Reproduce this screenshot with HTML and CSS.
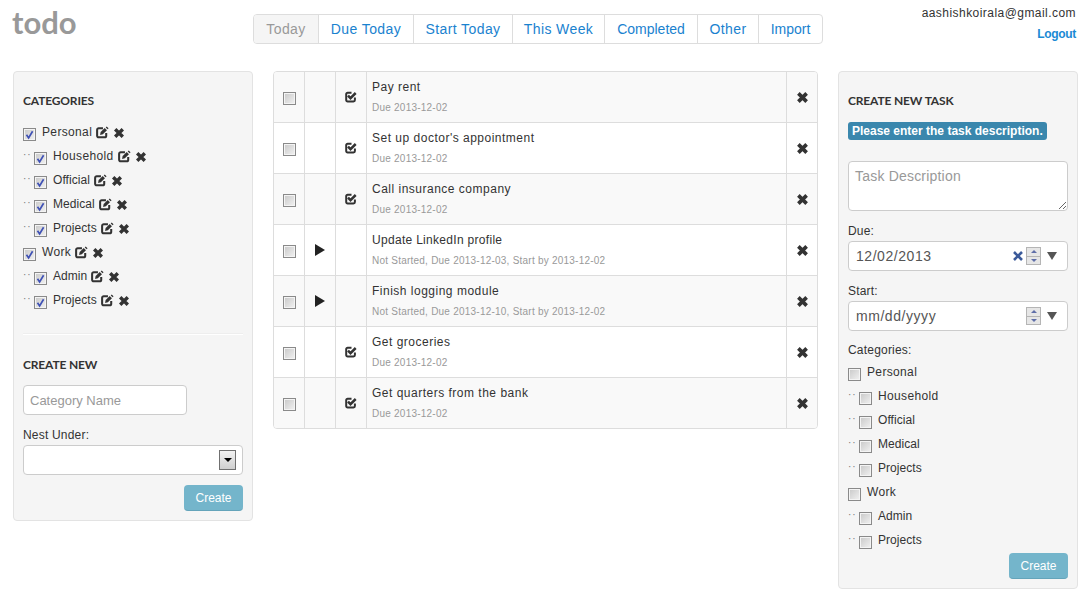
FILE: index.html
```html
<!DOCTYPE html>
<html lang="en">
<head>
<meta charset="utf-8">
<title>todo</title>
<link rel="stylesheet" href="styles.css">
</head>
<body>
<svg width="0" height="0" class="defs">
  <symbol id="edit" viewBox="0 0 14 14">
    <path d="M7.5 2.5H3A1.7 1.7 0 0 0 1.2 4.2V10.5A1.7 1.7 0 0 0 3 12.2H9.3A1.7 1.7 0 0 0 11 10.5V7.5" fill="none" stroke="currentColor" stroke-width="2.2"/>
    <path d="M4.4 9.6L5 6.5L9.4 2.2L11.8 4.6L7.4 9Z" fill="currentColor"/>
    <path d="M10.5 1.5L11.5 .5L13.5 2.5L12.5 3.5Z" fill="currentColor"/>
  </symbol>
  <symbol id="del" viewBox="0 0 12 12">
    <path d="M2.2 2.2L9.8 9.8M9.8 2.2L2.2 9.8" fill="none" stroke="currentColor" stroke-width="3.4"/>
  </symbol>
  <symbol id="task" viewBox="0 0 12 12">
    <path d="M6.5 1.7H2.6A1.4 1.4 0 0 0 1.2 3.1V9A1.4 1.4 0 0 0 2.6 10.4H8.5A1.4 1.4 0 0 0 9.9 9V6.5" fill="none" stroke="currentColor" stroke-width="2"/>
    <path d="M3 4.6L5.5 7.2L10.7 2" fill="none" stroke="currentColor" stroke-width="2.5"/>
  </symbol>
  <symbol id="tick" viewBox="0 0 11 11">
    <path d="M2.5 5.8L4.6 9L8.6 2.2" fill="none" stroke="currentColor" stroke-width="1.7"/>
  </symbol>
</svg>

<header class="top">
  <div class="brand">todo</div>
  <nav class="tabs">
    <a class="tab tab-active tab-w1">Today</a>
    <a class="tab tab-w2">Due Today</a>
    <a class="tab tab-w3">Start Today</a>
    <a class="tab tab-w4">This Week</a>
    <a class="tab tab-w5">Completed</a>
    <a class="tab tab-w6">Other</a>
    <a class="tab tab-w7">Import</a>
  </nav>
  <div class="user">
    <div class="email">aashishkoirala@gmail.com</div>
    <a class="logout">Logout</a>
  </div>
</header>

<main class="layout">
  <aside class="panel panel-left">
    <h4 class="panel-title">CATEGORIES</h4>
    <ul class="cats">
      <li class="cat"><span class="cb"><svg class="tick"><use href="#tick"/></svg></span><span class="cat-name">Personal</span><svg class="ic-edit"><use href="#edit"/></svg><svg class="ic-del"><use href="#del"/></svg></li>
      <li class="cat cat-sub"><span class="dots">··</span><span class="cb"><svg class="tick"><use href="#tick"/></svg></span><span class="cat-name">Household</span><svg class="ic-edit"><use href="#edit"/></svg><svg class="ic-del"><use href="#del"/></svg></li>
      <li class="cat cat-sub"><span class="dots">··</span><span class="cb"><svg class="tick"><use href="#tick"/></svg></span><span class="cat-name cat-tight">Official</span><svg class="ic-edit"><use href="#edit"/></svg><svg class="ic-del"><use href="#del"/></svg></li>
      <li class="cat cat-sub"><span class="dots">··</span><span class="cb"><svg class="tick"><use href="#tick"/></svg></span><span class="cat-name cat-tight">Medical</span><svg class="ic-edit"><use href="#edit"/></svg><svg class="ic-del"><use href="#del"/></svg></li>
      <li class="cat cat-sub"><span class="dots">··</span><span class="cb"><svg class="tick"><use href="#tick"/></svg></span><span class="cat-name cat-tight">Projects</span><svg class="ic-edit"><use href="#edit"/></svg><svg class="ic-del"><use href="#del"/></svg></li>
      <li class="cat"><span class="cb"><svg class="tick"><use href="#tick"/></svg></span><span class="cat-name">Work</span><svg class="ic-edit"><use href="#edit"/></svg><svg class="ic-del"><use href="#del"/></svg></li>
      <li class="cat cat-sub"><span class="dots">··</span><span class="cb"><svg class="tick"><use href="#tick"/></svg></span><span class="cat-name cat-tight">Admin</span><svg class="ic-edit"><use href="#edit"/></svg><svg class="ic-del"><use href="#del"/></svg></li>
      <li class="cat cat-sub"><span class="dots">··</span><span class="cb"><svg class="tick"><use href="#tick"/></svg></span><span class="cat-name cat-tight">Projects</span><svg class="ic-edit"><use href="#edit"/></svg><svg class="ic-del"><use href="#del"/></svg></li>
    </ul>
    <hr class="rule">
    <h4 class="panel-title title-new">CREATE NEW</h4>
    <input class="field field-name" type="text" placeholder="Category Name">
    <label class="lbl lbl-nest">Nest Under:</label>
    <div class="field select"><span class="select-btn"><span class="select-arrow"></span></span></div>
    <div class="actions"><button class="btn">Create</button></div>
  </aside>

  <section class="tasks">
    <div class="row">
      <div class="c c-box"><span class="cb"></span></div><div class="c c-mid"></div><div class="c c-mid"><svg class="ic-task"><use href="#task"/></svg></div>
      <div class="c-main"><div class="t">Pay rent</div><div class="s">Due 2013-12-02</div></div>
      <div class="c c-x"><svg class="ic-x"><use href="#del"/></svg></div>
    </div>
    <div class="row">
      <div class="c c-box"><span class="cb"></span></div><div class="c c-mid"></div><div class="c c-mid"><svg class="ic-task"><use href="#task"/></svg></div>
      <div class="c-main"><div class="t">Set up doctor's appointment</div><div class="s">Due 2013-12-02</div></div>
      <div class="c c-x"><svg class="ic-x"><use href="#del"/></svg></div>
    </div>
    <div class="row">
      <div class="c c-box"><span class="cb"></span></div><div class="c c-mid"></div><div class="c c-mid"><svg class="ic-task"><use href="#task"/></svg></div>
      <div class="c-main"><div class="t">Call insurance company</div><div class="s">Due 2013-12-02</div></div>
      <div class="c c-x"><svg class="ic-x"><use href="#del"/></svg></div>
    </div>
    <div class="row">
      <div class="c c-box"><span class="cb"></span></div><div class="c c-mid"><span class="play"></span></div><div class="c c-mid"></div>
      <div class="c-main"><div class="t t-tight">Update LinkedIn profile</div><div class="s">Not Started, Due 2013-12-03, Start by 2013-12-02</div></div>
      <div class="c c-x"><svg class="ic-x"><use href="#del"/></svg></div>
    </div>
    <div class="row">
      <div class="c c-box"><span class="cb"></span></div><div class="c c-mid"><span class="play"></span></div><div class="c c-mid"></div>
      <div class="c-main"><div class="t">Finish logging module</div><div class="s">Not Started, Due 2013-12-10, Start by 2013-12-02</div></div>
      <div class="c c-x"><svg class="ic-x"><use href="#del"/></svg></div>
    </div>
    <div class="row">
      <div class="c c-box"><span class="cb"></span></div><div class="c c-mid"></div><div class="c c-mid"><svg class="ic-task"><use href="#task"/></svg></div>
      <div class="c-main"><div class="t">Get groceries</div><div class="s">Due 2013-12-02</div></div>
      <div class="c c-x"><svg class="ic-x"><use href="#del"/></svg></div>
    </div>
    <div class="row">
      <div class="c c-box"><span class="cb"></span></div><div class="c c-mid"></div><div class="c c-mid"><svg class="ic-task"><use href="#task"/></svg></div>
      <div class="c-main"><div class="t">Get quarters from the bank</div><div class="s">Due 2013-12-02</div></div>
      <div class="c c-x"><svg class="ic-x"><use href="#del"/></svg></div>
    </div>
  </section>

  <aside class="panel panel-right">
    <h4 class="panel-title">CREATE NEW TASK</h4>
    <div class="pill-row"><span class="pill">Please enter the task description.</span></div>
    <textarea class="area" placeholder="Task Description"></textarea>
    <label class="lbl lbl-due">Due:</label>
    <div class="field date">
      <span class="date-val">12/02/2013</span>
      <svg class="date-clear" viewBox="0 0 12 12"><path d="M2 2L10 10M10 2L2 10" fill="none" stroke="currentColor" stroke-width="2.6"/></svg>
      <span class="spin"><span class="spin-up"></span><span class="spin-down"></span></span>
      <span class="date-arrow"></span>
    </div>
    <label class="lbl lbl-start">Start:</label>
    <div class="field date">
      <span class="date-val">mm/dd/yyyy</span>
      <span class="spin"><span class="spin-up"></span><span class="spin-down"></span></span>
      <span class="date-arrow"></span>
    </div>
    <label class="lbl lbl-cats">Categories:</label>
    <ul class="cats cats-form">
      <li class="cat"><span class="cb"></span><span class="cat-name">Personal</span></li>
      <li class="cat cat-sub"><span class="dots">··</span><span class="cb"></span><span class="cat-name">Household</span></li>
      <li class="cat cat-sub"><span class="dots">··</span><span class="cb"></span><span class="cat-name cat-tight">Official</span></li>
      <li class="cat cat-sub"><span class="dots">··</span><span class="cb"></span><span class="cat-name cat-tight">Medical</span></li>
      <li class="cat cat-sub"><span class="dots">··</span><span class="cb"></span><span class="cat-name cat-tight">Projects</span></li>
      <li class="cat"><span class="cb"></span><span class="cat-name">Work</span></li>
      <li class="cat cat-sub"><span class="dots">··</span><span class="cb"></span><span class="cat-name cat-tight">Admin</span></li>
      <li class="cat cat-sub"><span class="dots">··</span><span class="cb"></span><span class="cat-name cat-tight">Projects</span></li>
    </ul>
    <div class="actions actions-right"><button class="btn">Create</button></div>
  </aside>
</main>
</body>
</html>
```

FILE: styles.css
```css
* { box-sizing: border-box; }
html, body { margin: 0; padding: 0; }
body {
  background: #fff;
  color: #333;
  font-family: "Liberation Sans", Arial, sans-serif;
  font-size: 12px;
  line-height: 18px;
  padding: 0 12px 0 13px;
  overflow: hidden;
}
.defs { position: absolute; }
ul { list-style: none; margin: 0; padding: 0; }

.top { display: flex; align-items: flex-start; height: 71px; }
.brand {
  width: 241px;
  margin-left: -1px;
  font-family: Lato, sans-serif;
  font-weight: 700;
  font-size: 31px;
  line-height: 44px;
  color: #999;
}
.tabs {
  display: flex;
  margin-top: 14px;
  height: 30px;
  border: 1px solid #ddd;
  border-radius: 4px;
  overflow: hidden;
}
.tab {
  display: flex;
  align-items: center;
  justify-content: center;
  font-size: 14px;
  letter-spacing: .4px;
  color: #1a82cf;
  border-left: 1px solid #ddd;
}
.tab:first-child { border-left: 0; }
.tab-active { background: #f5f5f5; color: #999; }
.tab-w1 { width: 64px; }
.tab-w2 { width: 95px; }
.tab-w3 { width: 99px; }
.tab-w4 { width: 92px; }
.tab-w5 { width: 93px; letter-spacing: 0; }
.tab-w6 { width: 61px; }
.tab-w7 { width: 64px; letter-spacing: 0; }
.user { margin-left: auto; margin-right: 2px; text-align: right; padding-top: 4px; }
.email { line-height: 18px; color: #333; letter-spacing: .45px; }
.logout { display: block; margin-top: 3px; font-weight: 700; color: #1a8ad4; line-height: 18px; letter-spacing: -.3px; }

.layout { display: flex; align-items: flex-start; gap: 20px; }
.panel {
  width: 240px;
  flex: none;
  background: #f5f5f5;
  border: 1px solid #e3e3e3;
  border-radius: 4px;
  padding: 19px 9px 9px;
}
.panel-title {
  margin: 0;
  font-family: Lato, sans-serif;
  font-size: 12px;
  font-weight: 700;
  line-height: 20px;
  letter-spacing: -.15px;
  color: #333;
}
.title-new { margin-top: 20px; }

.cats { margin-top: 10px; }
.cat { display: flex; align-items: center; height: 24px; }
.cb {
  flex: none;
  display: block;
  position: relative;
  width: 13px;
  height: 13px;
  margin-top: 3px;
  border: 1px solid #8a8a8a;
  background: linear-gradient(135deg, #c8c8c8, #f2f2f2);
  box-shadow: inset 0 0 0 1px #f4f4f4;
}
.tick { position: absolute; left: 0; top: 0; width: 11px; height: 11px; color: #3f51b5; }
.dots { flex: none; width: 11px; color: #777; font-size: 10px; line-height: 10px; letter-spacing: 1px; margin-top: -4px; }
.cat-name { margin-left: 6px; color: #333; margin-top: -2px; letter-spacing: .35px; }
.cat-tight { letter-spacing: .05px; }
.ic-edit { flex: none; width: 13px; height: 13px; margin-left: 4px; color: #333; margin-top: -1px; }
.ic-del { flex: none; width: 12px; height: 12px; margin-left: 4px; color: #333; margin-top: -1px; }

.rule { border: 0; border-top: 1px solid #eee; border-bottom: 1px solid #fff; margin: 20px 0 0; height: 2px; }

.field {
  display: block;
  background: #fff;
  border: 1px solid #ccc;
  border-radius: 4px;
  height: 30px;
  font-family: inherit;
}
.field-name { width: 164px; margin-top: 10px; padding: 4px 6px; font-size: 13px; }
.field-name::placeholder, .area::placeholder { color: #999; opacity: 1; }
.lbl { display: block; line-height: 18px; color: #333; letter-spacing: .2px; }
.lbl-nest { margin-top: 11px; }
.select { position: relative; width: 220px; margin-top: 1px; }
.select-btn {
  position: absolute;
  right: 6px;
  top: 4px;
  width: 17px;
  height: 20px;
  border: 1px solid #707070;
  background: linear-gradient(#f2f2f2, #cfcfcf);
  display: flex;
  align-items: center;
  justify-content: center;
}
.select-arrow { width: 0; height: 0; border: 4px solid transparent; border-top-color: #000; border-bottom: 0; }
.actions { display: flex; justify-content: flex-end; margin-top: 10px; }
.btn {
  width: 59px;
  height: 26px;
  padding: 0;
  border: 0;
  border-bottom: 1px solid #64a4ba;
  border-radius: 4px;
  background: #74b5cb;
  color: #fff;
  font-family: inherit;
  font-size: 12px;
}

.tasks {
  width: 545px;
  flex: none;
  border: 1px solid #ddd;
  border-radius: 4px;
  overflow: hidden;
}
.row { display: flex; height: 51px; border-top: 1px solid #ddd; }
.row:first-child { border-top: 0; height: 50px; }
.row:nth-child(odd) { background: #f9f9f9; }
.c { flex: none; display: flex; align-items: center; justify-content: center; }
.c-box { width: 30px; }
.c-mid { width: 31px; border-left: 1px solid #ddd; }
.c-main { flex: 1; border-left: 1px solid #ddd; padding: 6px 5px 0; }
.c-x { width: 31px; border-left: 1px solid #ddd; }
.t { font-size: 12px; line-height: 18px; letter-spacing: .5px; color: #333; }
.t-tight { letter-spacing: .3px; }
.s { font-size: 10px; line-height: 14px; margin-top: 5px; color: #999; letter-spacing: .23px; }
.ic-task { width: 12px; height: 12px; color: #333; }
.ic-x { width: 13px; height: 13px; color: #333; }
.play { width: 0; height: 0; border-left: 10px solid #222; border-top: 6px solid transparent; border-bottom: 6px solid transparent; }

.pill-row { margin-top: 11px; height: 18px; display: flex; }
.pill {
  background: #3a87ad;
  color: #fff;
  font-weight: 700;
  font-size: 12px;
  line-height: 18px;
  padding: 0 4px;
  border-radius: 3px;
}
.area {
  display: block;
  width: 220px;
  height: 50px;
  margin-top: 21px;
  padding: 4px 6px;
  background: #fff;
  border: 1px solid #ccc;
  border-radius: 4px;
  font-family: inherit;
  font-size: 14px;
  line-height: 20px;
  letter-spacing: .2px;
}
.lbl-due { margin-top: 11px; }
.lbl-start { margin-top: 11px; }
.lbl-cats { margin-top: 10px; }
.date {
  width: 220px;
  margin-top: 1px;
  display: flex;
  align-items: center;
  padding: 0 7px;
  font-size: 14px;
  color: #555;
  letter-spacing: .55px;
}
.date-val { flex: 1; }
.date-clear { width: 12px; height: 12px; color: #3b5a9a; margin-right: 2px; }
.spin { width: 15px; height: 18px; border: 1px solid #b5b5b5; display: flex; flex-direction: column; background: #e6e6e6; }
.spin-up, .spin-down { flex: 1; display: flex; align-items: center; justify-content: center; }
.spin-down { border-top: 1px solid #b5b5b5; }
.spin-up::after { content: ""; border: 3px solid transparent; border-bottom: 3px solid #5f6ea8; border-top: 0; }
.spin-down::after { content: ""; border: 3px solid transparent; border-top: 3px solid #5f6ea8; border-bottom: 0; }
.date-arrow { width: 0; height: 0; border: 5px solid transparent; border-top: 8px solid #555; border-bottom: 0; margin-left: 6px; margin-right: 3px; }
.cats-form { margin-top: 2px; }
.actions-right { margin-top: 0; }
```
